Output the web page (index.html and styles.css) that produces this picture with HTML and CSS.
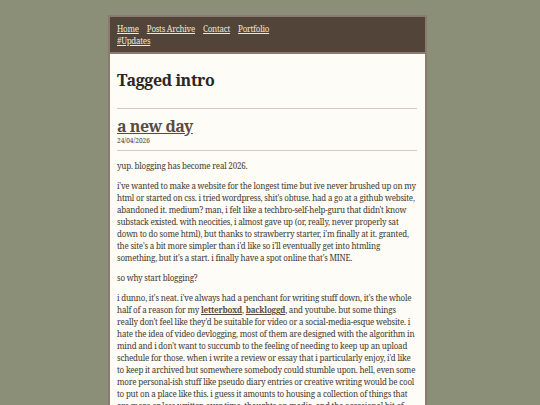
FILE: index.html
```html
<!DOCTYPE html>
<html lang="en">
<head>
<meta charset="utf-8">
<title>Tagged intro</title>
<link rel="stylesheet" href="styles.css">
</head>
<body>
<div class="page">
  <header class="site-nav">
    <div class="nav-row">
      <a href="#">Home</a>
      <a href="#">Posts Archive</a>
      <a href="#">Contact</a>
      <a href="#">Portfolio</a>
    </div>
    <div class="nav-row">
      <a href="#">#Updates</a>
    </div>
  </header>
  <main class="content">
    <h1 class="tag-title">Tagged intro</h1>
    <hr class="rule">
    <article class="post">
      <h2 class="post-title"><a href="#">a new day</a></h2>
      <div class="post-date">24/04/2026</div>
      <hr class="rule post-rule">
      <p>yup. blogging has become real 2026.</p>
      <p>i've wanted to make a website for the longest time but ive never brushed up on my html or started on css. i tried wordpress, shit's obtuse. had a go at a github website, abandoned it. medium? man, i felt like a techbro-self-help-guru that didn't know substack existed. with neocities, i almost gave up (or, really, never properly sat down to do some html), but thanks to strawberry starter, i'm finally at it. granted, the site's a bit more simpler than i'd like so i'll eventually get into htmling something, but it's a start. i finally have a spot online that's MINE.</p>
      <p>so why start blogging?</p>
      <p>i dunno, it's neat. i've always had a penchant for writing stuff down, it's the whole half of a reason for my <a href="#">letterboxd</a>, <a href="#">backloggd</a>, and youtube. but some things really don't feel like they'd be suitable for video or a social-media-esque website. i hate the idea of video devlogging, most of them are designed with the algorithm in mind and i don't want to succumb to the feeling of needing to keep up an upload schedule for those. when i write a review or essay that i particularly enjoy, i'd like to keep it archived but somewhere somebody could stumble upon. hell, even some more personal-ish stuff like pseudo diary entries or creative writing would be cool to put on a place like this. i guess it amounts to housing a collection of things that are more or less written over time, thoughts on media, and the occasional bit of me, all of it in one place.</p>
    </article>
  </main>
</div>
</body>
</html>
```

FILE: styles.css
```css
html, body {
  margin: 0;
  padding: 0;
}

body {
  background: #8b8f78;
  font-family: "Noto Serif", "DejaVu Serif", serif;
  color: #43392f;
  padding-right: 5px;
}

.page {
  width: 315px;
  margin: 15px auto 0;
  border: 2px solid #8a7b6e;
  background: #fdfcf6;
}

.site-nav {
  background: #524439;
  border-bottom: 2px solid #8a7b6e;
  padding: 6px 7px 5px;
  font-size: 8px;
  line-height: 12px;
  letter-spacing: -0.25px;
}

.nav-row {
  display: flex;
  gap: 8px;
}

.site-nav a {
  color: #efe7d8;
  text-decoration: underline;
}

.content {
  padding: 0 8px 20px 7px;
}

.tag-title {
  margin: 0;
  padding: 15px 0 17px;
  font-size: 16px;
  line-height: 22px;
  letter-spacing: -0.4px;
  color: #2b2622;
}

.rule {
  border: 0;
  border-top: 1px solid #cfccc6;
  margin: 0;
}

.post-rule {
  margin-bottom: 9px;
}

.post-title {
  margin: 7px 0 0;
  font-size: 16px;
  line-height: 20px;
  letter-spacing: -0.5px;
}

.post-title a {
  color: #5b4b3f;
}

.post-date {
  font-size: 6.5px;
  line-height: 9px;
  color: #3f3a35;
  margin-bottom: 5px;
}

.post p {
  font-size: 8px;
  line-height: 12px;
  letter-spacing: -0.2px;
  margin: 8px 0;
}

.post p a {
  color: #5b4b3f;
  font-weight: bold;
}
```
